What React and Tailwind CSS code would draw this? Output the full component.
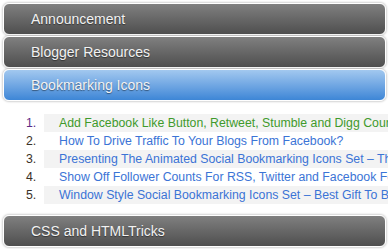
const sections = [
  { title: 'Announcement' },
  { title: 'Blogger Resources' },
  { title: 'Bookmarking Icons', active: true },
]

const links = [
  { text: 'Add Facebook Like Button, Retweet, Stumble and Digg Count Buttons', visited: true },
  { text: 'How To Drive Traffic To Your Blogs From Facebook?' },
  { text: 'Presenting The Animated Social Bookmarking Icons Set – The Best' },
  { text: 'Show Off Follower Counts For RSS, Twitter and Facebook For Free' },
  { text: 'Window Style Social Bookmarking Icons Set – Best Gift To Bloggers' },
]

const Bar = ({ title, active }) => (
  <div
    className={`h-[32px] rounded-[6px] border border-white shadow-[0_0_2px_1px_rgba(0,0,0,0.18)] flex items-center pl-[27px] text-[14px] text-[#f2f2f2] [text-shadow:0_1px_1px_rgba(0,0,0,0.45)] ${
      active
        ? 'bg-gradient-to-b from-[#a2c8ef] to-[#3d86d6]'
        : 'bg-gradient-to-b from-[#808080] to-[#4f4f4f]'
    }`}
  >
    {title}
  </div>
)

export default function App() {
  return (
    <div className="w-[390px] h-[249px] overflow-hidden bg-white font-['Liberation_Sans',Arial,sans-serif]">
      <div className="pt-[3px] pl-[3px] pr-[4px] flex flex-col gap-[1px]">
        {sections.map((s) => (
          <Bar key={s.title} {...s} />
        ))}
      </div>

      <ol className="mt-[13px] flex flex-col text-[12.3px] leading-[18px]">
        {links.map((l, i) => (
          <li key={i} className="flex">
            <span className={`w-[44px] pl-[26px] ${i === 0 ? 'text-[#5b2a86]' : 'text-[#3a3228]'}`}>
              {i + 1}.
            </span>
            <span
              className={`flex-1 min-w-0 pl-[15px] mr-[2px] whitespace-nowrap overflow-hidden ${
                i % 2 === 0 ? 'bg-[#f3f3f3]' : ''
              } ${l.visited ? 'text-[#3f9a2c]' : 'text-[#3b74d6]'}`}
            >
              {l.text}
            </span>
          </li>
        ))}
      </ol>

      <div className="mt-[11px] pl-[3px] pr-[4px]">
        <Bar title="CSS and HTMLTricks" />
      </div>
    </div>
  )
}
